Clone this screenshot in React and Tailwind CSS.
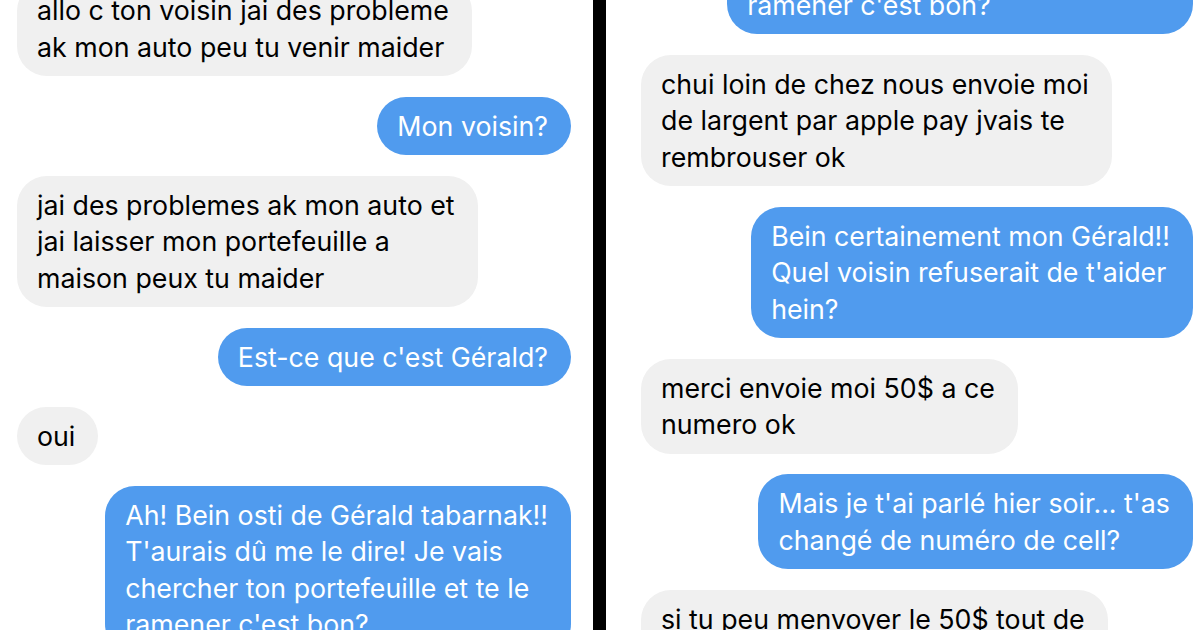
import React from "react";

const leftMessages = [
  { me: false, lines: ["allo c ton voisin jai des probleme", "ak mon auto peu tu venir maider"] },
  { me: true, lines: ["Mon voisin?"] },
  { me: false, lines: ["jai des problemes ak mon auto et", "jai laisser mon portefeuille a", "maison peux tu maider"] },
  { me: true, lines: ["Est-ce que c'est Gérald?"] },
  { me: false, lines: ["oui"] },
  {
    me: true,
    lines: [
      "Ah! Bein osti de Gérald tabarnak!!",
      "T'aurais dû me le dire! Je vais",
      "chercher ton portefeuille et te le",
      "ramener c'est bon?",
    ],
  },
];

const rightMessages = [
  {
    me: true,
    lines: [
      "Ah! Bein osti de Gérald tabarnak!!",
      "T'aurais dû me le dire! Je vais",
      "chercher ton portefeuille et te le",
      "ramener c'est bon?",
    ],
  },
  { me: false, lines: ["chui loin de chez nous envoie moi", "de largent par apple pay jvais te", "rembrouser ok"] },
  { me: true, lines: ["Bein certainement mon Gérald!!", "Quel voisin refuserait de t'aider", "hein?"] },
  { me: false, lines: ["merci envoie moi 50$ a ce", "numero ok"] },
  { me: true, lines: ["Mais je t'ai parlé hier soir... t'as", "changé de numéro de cell?"] },
  { me: false, lines: ["si tu peu menvoyer le 50$ tout de", "suite jvais te le remettre demain"] },
];

function Bubble({ me, lines, first, offset }) {
  return (
    <div
      className={`flex ${me ? "justify-end" : "justify-start"} ${first ? offset : ""}`}
    >
      <div
        className={`rounded-[30px] pl-5 pr-[23px] py-[11px] text-[26.75px] leading-[36.5px] whitespace-nowrap ${
          me ? "bg-[#509bee] text-white" : "bg-[#f0f0f0] text-black"
        }`}
      >
        {lines.map((l, i) => (
          <div key={i}>{l}</div>
        ))}
      </div>
    </div>
  );
}

export default function App() {
  return (
    <div
      className="flex w-[1200px] h-[630px] overflow-hidden bg-white"
      style={{ fontFamily: "Inter, 'Liberation Sans', sans-serif" }}
    >
      <div className="w-[593px] h-full overflow-hidden flex flex-col gap-[20.5px] pl-[17px] pr-[22px]">
        {leftMessages.map((m, i) => (
          <Bubble key={i} {...m} first={i === 0} offset="-mt-[19px]" />
        ))}
      </div>
      <div className="w-[13px] h-full bg-black shrink-0" />
      <div className="flex-1 h-full overflow-hidden flex flex-col gap-[20.5px] pl-[35px] pr-[7px]">
        {rightMessages.map((m, i) => (
          <Bubble key={i} {...m} first={i === 0} offset="-mt-[134px]" />
        ))}
      </div>
    </div>
  );
}
